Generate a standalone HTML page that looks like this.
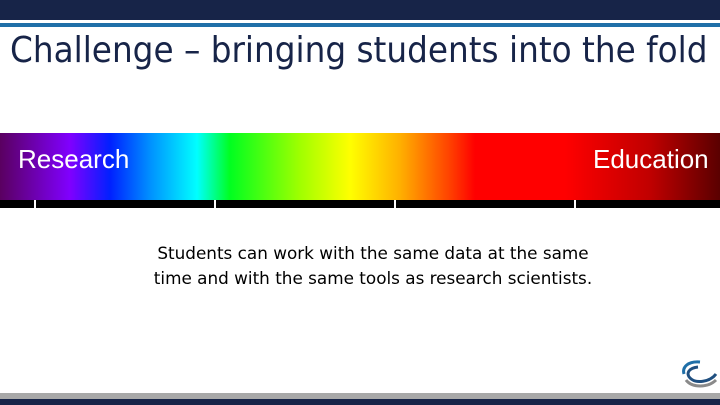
<!DOCTYPE html>
<html><head><style>
body{margin:0;width:720px;height:405px;position:relative;overflow:hidden;background:#fff;font-family:"Liberation Sans",sans-serif}
.a{position:absolute}
</style></head><body>
<div class="a" style="left:0;top:0;width:720px;height:20px;background:#172448"></div>
<div class="a" style="left:0;top:23px;width:720px;height:4px;background:#1f6fa8"></div>
<div class="a" style="left:10px;top:30px;font-family:'DejaVu Sans Condensed','Liberation Sans Narrow',sans-serif;font-size:36px;color:#172448;white-space:nowrap;transform-origin:0 0;transform:scaleX(1.01)">Challenge – bringing students into the fold</div>
<div class="a" style="left:0;top:133px;width:720px;height:67px;background:linear-gradient(to right,#5a0060 0px,#8000ff 70px,#0020ff 110px,#0090ff 150px,#00ffff 197px,#00ff20 230px,#a0ff00 300px,#ffff00 350px,#ffb000 400px,#ff4000 450px,#ff0000 475px,#ff0000 565px,#c00000 650px,#5a0000 720px)"></div>
<div class="a" style="left:0;top:200px;width:720px;height:8px;background:#000"></div>
<div class="a" style="left:34px;top:200px;width:2px;height:8px;background:#fff"></div>
<div class="a" style="left:214px;top:200px;width:2px;height:8px;background:#fff"></div>
<div class="a" style="left:394px;top:200px;width:2px;height:8px;background:#fff"></div>
<div class="a" style="left:574px;top:200px;width:2px;height:8px;background:#fff"></div>
<div class="a" style="left:18px;top:144px;font-size:26px;color:#fff">Research</div>
<div class="a" style="left:593px;top:144px;font-size:26px;color:#fff">Education</div>
<div class="a" style="left:13px;top:242px;width:720px;text-align:center;font-size:17px;line-height:25px;color:#000;font-family:'DejaVu Sans Condensed','Liberation Sans',sans-serif;transform-origin:50% 0;transform:scaleX(1.1)">Students can work with the same data at the same<br>time and with the same tools as research scientists.</div>
<svg class="a" style="left:680px;top:358px" width="40" height="32" viewBox="0 0 40 32">
<path d="M20 4 C8 3 2 9 4 16" stroke="#1f6fa8" stroke-width="3" fill="none"/>
<path d="M18 9 C8 10 6 16 10 20 C16 26 30 24 36 16" stroke="#1f4f80" stroke-width="3" fill="none"/>
<path d="M6 22 C12 30 28 30 36 22" stroke="#8a8a8a" stroke-width="3" fill="none"/>
</svg>
<div class="a" style="left:0;top:393px;width:720px;height:6px;background:#a8a8a8"></div>
<div class="a" style="left:0;top:399px;width:720px;height:6px;background:#172448"></div>
</body></html>
